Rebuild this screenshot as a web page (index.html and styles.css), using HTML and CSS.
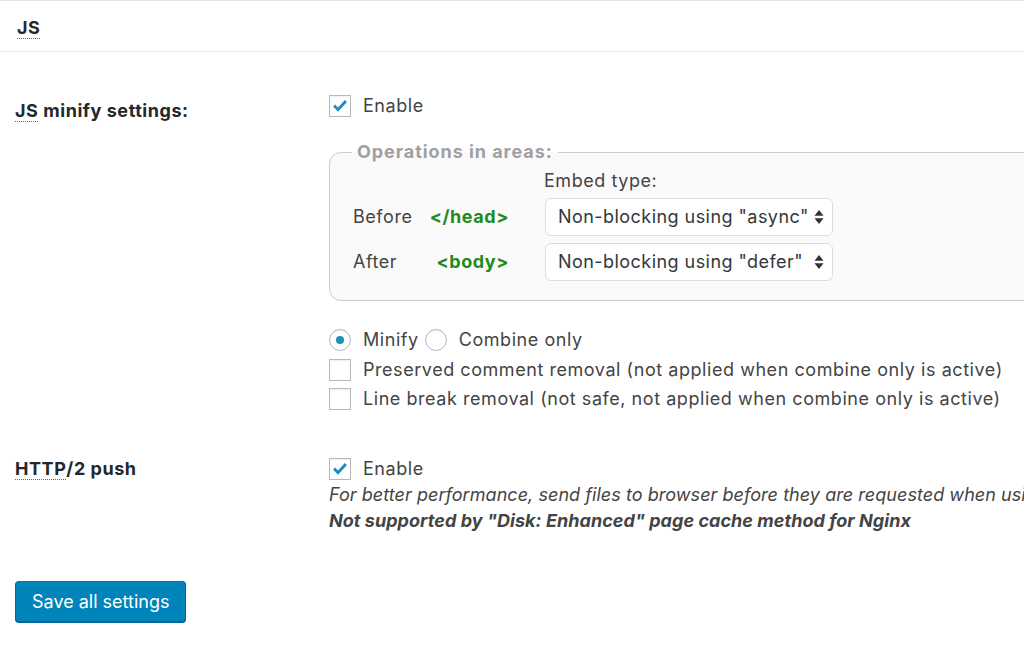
FILE: index.html
```html
<!DOCTYPE html>
<html lang="en">
<head>
    <meta charset="UTF-8">
    <meta name="viewport" content="width=device-width, initial-scale=1.0">
    <title>JS settings</title>
    <link rel="stylesheet" href="styles.css">
</head>
<body>

    <div class="postbox">
        <h3 class="hndle"><abbr title="JavaScript">JS</abbr></h3>

        <div class="inside">
            <div class="setting">
                <div class="setting-label label-minify"><abbr title="JavaScript">JS</abbr> minify settings:</div>
                <div class="setting-field field-minify">
                    <label class="option">
                        <span class="checkbox checked"><svg viewBox="0 0 22 22"><path d="M4.5 10.5 L8.8 15 L17.5 5.5"/></svg></span>
                        Enable
                    </label>

                    <fieldset class="areas">
                        <legend>Operations in areas:</legend>
                        <div class="areas-grid">
                            <span></span>
                            <span></span>
                            <span class="embed-title">Embed type:</span>

                            <span class="area-name">Before</span>
                            <span class="tag">&lt;/head&gt;</span>
                            <div class="select">
                                <span>Non-blocking using "async"</span>
                                <svg class="arrows" viewBox="0 0 10 16"><path d="M5 1 L9.5 6.8 L0.5 6.8 Z M0.5 9.2 L9.5 9.2 L5 15 Z"/></svg>
                            </div>

                            <span class="area-name">After</span>
                            <span class="tag">&lt;body&gt;</span>
                            <div class="select">
                                <span>Non-blocking using "defer"</span>
                                <svg class="arrows" viewBox="0 0 10 16"><path d="M5 1 L9.5 6.8 L0.5 6.8 Z M0.5 9.2 L9.5 9.2 L5 15 Z"/></svg>
                            </div>
                        </div>
                    </fieldset>

                    <div class="options">
                        <div class="option-line">
                            <label class="option">
                                <span class="radio checked"></span>
                                Minify
                            </label>
                            <label class="option">
                                <span class="radio"></span>
                                Combine only
                            </label>
                        </div>
                        <label class="option">
                            <span class="checkbox"></span>
                            Preserved comment removal (not applied when combine only is active)
                        </label>
                        <label class="option">
                            <span class="checkbox"></span>
                            Line break removal (not safe, not applied when combine only is active)
                        </label>
                    </div>
                </div>
            </div>

            <div class="setting">
                <div class="setting-label label-push"><abbr title="Hypertext Transfer Protocol">HTTP</abbr>/2 push</div>
                <div class="setting-field field-push">
                    <label class="option">
                        <span class="checkbox checked"><svg viewBox="0 0 22 22"><path d="M4.5 10.5 L8.8 15 L17.5 5.5"/></svg></span>
                        Enable
                    </label>
                    <p class="description">For better performance, send files to browser before they are requested when usi</p>
                    <p class="description"><b>Not supported by "Disk: Enhanced" page cache method for Nginx</b></p>
                </div>
            </div>

            <button class="button-primary">Save all settings</button>
        </div>
    </div>

</body>
</html>
```

FILE: styles.css
```css
* {
    margin: 0;
    padding: 0;
    box-sizing: border-box;
}

body {
    font-family: Inter, "Liberation Sans", sans-serif;
    font-size: 18px;
    line-height: 22px;
    letter-spacing: 0.55px;
    color: #444;
    background-color: #fff;
    overflow: hidden;
    width: 1024px;
    height: 663px;
}

abbr {
    text-decoration: none;
    border-bottom: 1px dotted #666;
}

.postbox {
    border-top: 1px solid #e2e4e7;
}

.hndle {
    height: 51px;
    padding: 3px 17px 0;
    line-height: 48px;
    font-size: 18px;
    font-weight: 700;
    color: #23282d;
    border-bottom: 1px solid #eee;
}

.inside {
    padding: 0 0 0 15px;
}

.setting {
    display: flex;
    align-items: flex-start;
}

.setting-label {
    width: 314px;
    flex-shrink: 0;
    font-weight: 700;
    color: #23282d;
}

.label-minify {
    padding-top: 48px;
}

.field-minify {
    padding-top: 43px;
}

.label-push,
.field-push {
    padding-top: 48px;
}

.option {
    display: flex;
    align-items: center;
    gap: 12px;
    height: 22px;
    white-space: nowrap;
}

.checkbox,
.radio {
    width: 22px;
    height: 22px;
    flex-shrink: 0;
    border: 1px solid #b4b9be;
    background: #fff;
    box-shadow: inset 0 1px 2px rgba(0, 0, 0, 0.07);
}

.checkbox svg {
    display: block;
    width: 20px;
    height: 20px;
    fill: none;
    stroke: #1e8cbe;
    stroke-width: 3.2;
}

.radio {
    border-radius: 50%;
    display: flex;
    align-items: center;
    justify-content: center;
}

.radio.checked::after {
    content: "";
    width: 8px;
    height: 8px;
    border-radius: 50%;
    background: #1e8cbe;
}

.areas {
    width: 760px;
    margin-top: 24px;
    padding: 0 23px 19px;
    border: 1px solid #ccc;
    border-radius: 12px;
    background: #fafafa;
}

.areas legend {
    padding: 0 5px;
    margin-left: -1px;
    font-weight: 700;
    letter-spacing: 0.95px;
    color: #a0a0a0;
}

.areas-grid {
    display: grid;
    grid-template-columns: 75px 81px auto;
    row-gap: 7px;
    align-items: center;
    margin-top: 7px;
}

.embed-title {
    margin-left: 35px;
    margin-bottom: -1px;
}

.tag {
    text-align: right;
    font-weight: 700;
    color: #1f8a1f;
}

.select {
    display: flex;
    align-items: center;
    justify-content: space-between;
    width: 288px;
    height: 38px;
    margin-left: 36px;
    padding: 0 8px 0 12px;
    border: 1px solid #ddd;
    border-radius: 6px;
    background: #fff;
    color: #32373c;
    letter-spacing: 0.45px;
}

.arrows {
    width: 10px;
    height: 16px;
    fill: #333;
}

.options {
    display: flex;
    flex-direction: column;
    gap: 7.5px;
    margin-top: 28px;
}

.option-line {
    display: flex;
    gap: 6px;
}

.description {
    line-height: 26px;
    font-style: italic;
    letter-spacing: 0.05px;
    white-space: nowrap;
}

.field-push .option {
    margin-bottom: 2px;
}

.description b {
    font-weight: 700;
}

.button-primary {
    display: block;
    margin-top: 47px;
    height: 41px;
    padding: 0 16px;
    font-family: inherit;
    font-size: 18px;
    letter-spacing: 0;
    color: #fff;
    background: #0085ba;
    border: 1px solid #0073aa;
    border-color: #0073aa #006799 #006799;
    border-radius: 4px;
    box-shadow: 0 1px 0 #006799;
    cursor: pointer;
}
```
